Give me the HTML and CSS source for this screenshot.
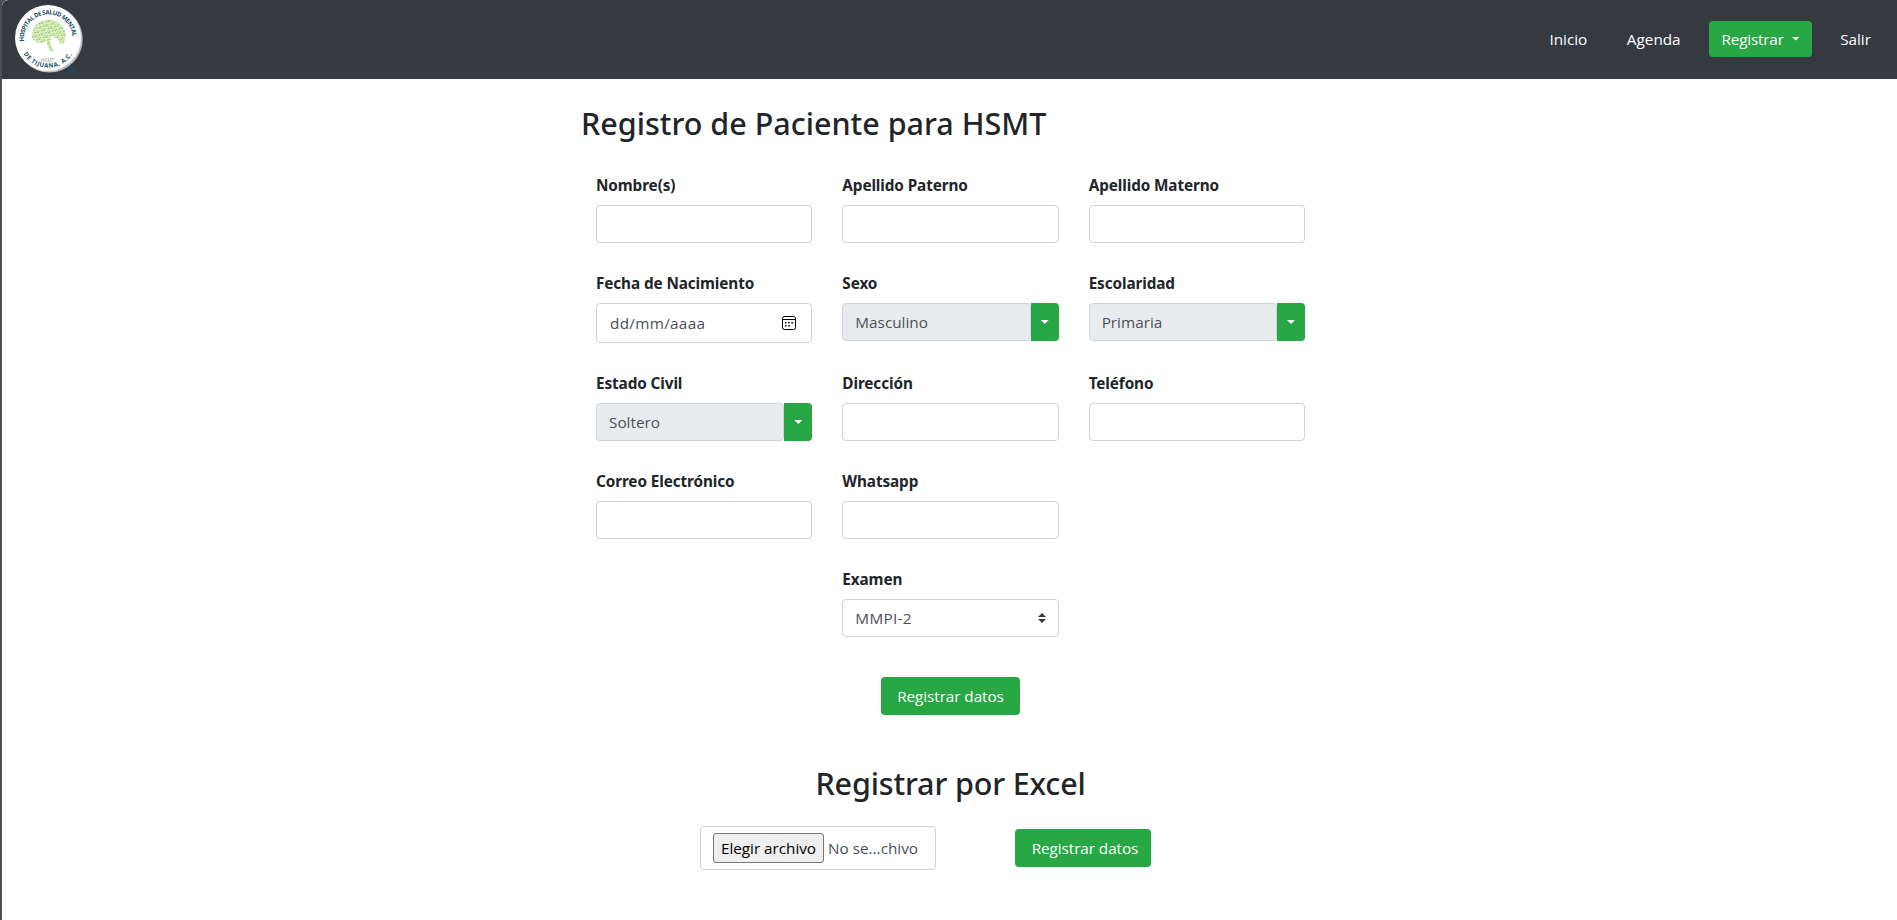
FILE: index.html
```html
<!DOCTYPE html>
<html lang="es">
<head>
<meta charset="utf-8">
<title>Registro de Paciente</title>
<link rel="stylesheet" href="styles.css">
</head>
<body>
<div class="page">
  <header class="navbar">
    <svg class="logo" width="72" height="74" viewBox="0 0 72 74">
      <defs>
        <path id="arc-top" d="M11 39.5 A24.4 24.4 0 1 1 59.2 41.5"/>
        <path id="arc-bottom" d="M10.5 51.8 A28.6 28.6 0 0 0 60.4 50.4"/>
        <pattern id="dots" width="5" height="5" patternUnits="userSpaceOnUse" patternTransform="rotate(28)">
          <path d="M0 0h1.6v1H0zM3 1h1.3v1.6H3zM.5 3h1.2v1.2H.5zM3.4 3.9h1v.8h-1z" fill="#7fc043"/>
        </pattern>
      </defs>
      <circle cx="36.4" cy="37.3" r="33.3" fill="#b9bcbf"/>
      <circle cx="35" cy="36" r="33" fill="#fff"/>
      <path d="M19 35c-1-8 4-15 12-17 9-2 18 3 21 11 2 6 0 12-3 13-3 0-3-4-5-5l-5-3c-2 2-2 5-1 8 0 3 3 5 3 7-2 2-4 0-5-2-2-3-2-6-3-8-3 2-7 3-10 1-2-2-4-2-4-5z" fill="#e2f1ce"/>
      <path d="M19 35c-1-8 4-15 12-17 9-2 18 3 21 11 2 6 0 12-3 13-3 0-3-4-5-5l-5-3c-2 2-2 5-1 8 0 3 3 5 3 7-2 2-4 0-5-2-2-3-2-6-3-8-3 2-7 3-10 1-2-2-4-2-4-5z" fill="url(#dots)"/>
      <text class="logo-ring"><textPath href="#arc-top" textLength="77">HOSPITAL DE SALUD MENTAL</textPath></text>
      <text class="logo-ring"><textPath href="#arc-bottom" textLength="58">DE TIJUANA, A.C.</textPath></text>
      <text class="logo-mono" x="28" y="60" textLength="13">HSMT</text>
      <ellipse cx="59.5" cy="68.5" rx="3.4" ry="2.2" fill="#1c4661"/>
    </svg>
    <nav class="nav">
      <a class="nav-link inicio">Inicio</a>
      <a class="nav-link agenda">Agenda</a>
      <a class="btn nav-btn">Registrar<span class="caret"></span></a>
      <a class="nav-link salir">Salir</a>
    </nav>
  </header>

  <main class="content">
    <h2 class="title">Registro de Paciente para HSMT</h2>
    <form class="grid">
      <div class="field"><label class="label">Nombre(s)</label><div class="control"></div></div>
      <div class="field"><label class="label">Apellido Paterno</label><div class="control"></div></div>
      <div class="field"><label class="label">Apellido Materno</label><div class="control"></div></div>

      <div class="field"><label class="label">Fecha de Nacimiento</label>
        <div class="control date"><span class="date-text">dd/mm/aaaa</span>
          <svg class="calendar" width="14" height="14" viewBox="0 0 14 14">
            <rect x=".5" y=".5" width="13" height="13" rx="2" fill="none" stroke="#000"/>
            <path d="M1 3.5h12" stroke="#000"/>
            <path d="M3 6h1.5v1.5H3zM6.2 6h1.5v1.5H6.2zM9.4 6h1.5v1.5H9.4zM3 9h1.5v1.5H3zM6.2 9h1.5v1.5H6.2z"/>
          </svg>
        </div>
      </div>
      <div class="field"><label class="label">Sexo</label>
        <div class="group"><div class="control readonly">Masculino</div><div class="toggle"><span class="caret"></span></div></div></div>
      <div class="field"><label class="label">Escolaridad</label>
        <div class="group"><div class="control readonly">Primaria</div><div class="toggle"><span class="caret"></span></div></div></div>

      <div class="field"><label class="label">Estado Civil</label>
        <div class="group"><div class="control readonly">Soltero</div><div class="toggle"><span class="caret"></span></div></div></div>
      <div class="field"><label class="label">Dirección</label><div class="control"></div></div>
      <div class="field"><label class="label">Teléfono</label><div class="control"></div></div>

      <div class="field"><label class="label">Correo Electrónico</label><div class="control"></div></div>
      <div class="field"><label class="label">Whatsapp</label><div class="control"></div></div>

      <div class="field exam"><label class="label">Examen</label>
        <div class="control select"><span class="exam-text">MMPI-2</span>
          <svg width="8" height="10" viewBox="0 0 4 5"><path fill="#343a40" d="M2 0L0 2h4zm0 5L0 3h4z"/></svg>
        </div>
      </div>
    </form>
    <div class="submit"><a class="btn save">Registrar datos</a></div>
    <h2 class="subtitle">Registrar por Excel</h2>
    <div class="excel">
      <div class="file"><span class="file-btn">Elegir archivo</span><span class="file-name">No se...chivo</span></div>
      <a class="btn upload">Registrar datos</a>
    </div>
  </main>
</div>
</body>
</html>
```

FILE: styles.css
```css
* { box-sizing: border-box; }
body {
  margin: 0;
  background: #4d4c50;
  color: #212529;
  font: 15.3px/24px "Open Sans", "Noto Sans", sans-serif;
}
.page {
  margin-left: 2px;
  height: 920px;
  background: #fff;
  overflow: hidden;
}
.navbar {
  display: flex;
  justify-content: space-between;
  align-items: center;
  height: 79px;
  padding: 0 26px 2px 11px;
  background: #343a40;
  color: #fff;
}
.page, .navbar { border-top-left-radius: 6px; }
.logo { display: block; }
.logo-ring { font: 700 6.1px "Open Sans", sans-serif; fill: #164a68; }
.logo-mono { font: 400 4.6px "Open Sans", sans-serif; fill: #8f9598; }
.nav { display: flex; align-items: center; }
.nav-link { color: #fff; }
.inicio { margin-right: 39.5px; }
.agenda { margin-right: 28.5px; }
.salir { margin-left: 28px; }
.btn {
  display: flex;
  align-items: center;
  justify-content: center;
  height: 38px;
  border-radius: 4px;
  background: #28a745;
  color: #fff;
  letter-spacing: -0.08px;
  white-space: nowrap;
}
.nav-btn { width: 103px; height: 36px; gap: 8px; letter-spacing: -0.2px; }
.caret {
  width: 8px;
  height: 4px;
  background: #fff;
  clip-path: polygon(0 0, 100% 0, 50% 100%);
}
.content {
  width: 739px;
  margin-left: 579px;
  padding-top: 25px;
}
.title, .subtitle {
  margin: 0;
  font: 500 30.5px/38px "Noto Sans", sans-serif;
}
.grid {
  display: grid;
  grid-template-columns: repeat(3, 1fr);
  gap: 28px 30px;
  margin-top: 31px;
  padding: 0 15px;
}
.label {
  display: block;
  margin-bottom: 8px;
  font-family: "Noto Sans", sans-serif;
  font-weight: 700;
  letter-spacing: -0.1px;
}
.control {
  display: flex;
  align-items: center;
  justify-content: space-between;
  height: 38px;
  padding: 0 12px;
  border: 1px solid #ced4da;
  border-radius: 4px;
  background: #fff;
  color: #495057;
}
.date { height: 40px; padding: 0 15px 0 13px; }
.date-text { letter-spacing: 0.3px; }
.exam-text { letter-spacing: 0.3px; }
.group { display: flex; }
.readonly { flex: 1; background: #e9ecef; }
.toggle {
  display: flex;
  align-items: center;
  justify-content: center;
  width: 28px;
  height: 38px;
  border-radius: 0 4px 4px 0;
  background: #28a745;
}
.exam { grid-column: 2; }
.submit {
  display: flex;
  justify-content: center;
  margin-top: 40px;
}
.save { width: 139px; }
.subtitle { margin-top: 49px; text-align: center; letter-spacing: -0.15px; }
.excel {
  display: flex;
  align-items: center;
  gap: 79px;
  margin: 24px 0 0 119px;
}
.file {
  display: flex;
  align-items: center;
  width: 236px;
  height: 44px;
  padding-left: 12px;
  border: 1px solid #ced4da;
  border-radius: 4px;
  color: #495057;
}
.file-btn {
  width: 111px;
  height: 30px;
  margin-right: 4px;
  border: 1px solid #767676;
  border-radius: 3px;
  background: #efefef;
  color: #000;
  line-height: 28px;
  text-align: center;
  letter-spacing: -0.04px;
}
.upload { width: 136px; padding-left: 4px; }
```
